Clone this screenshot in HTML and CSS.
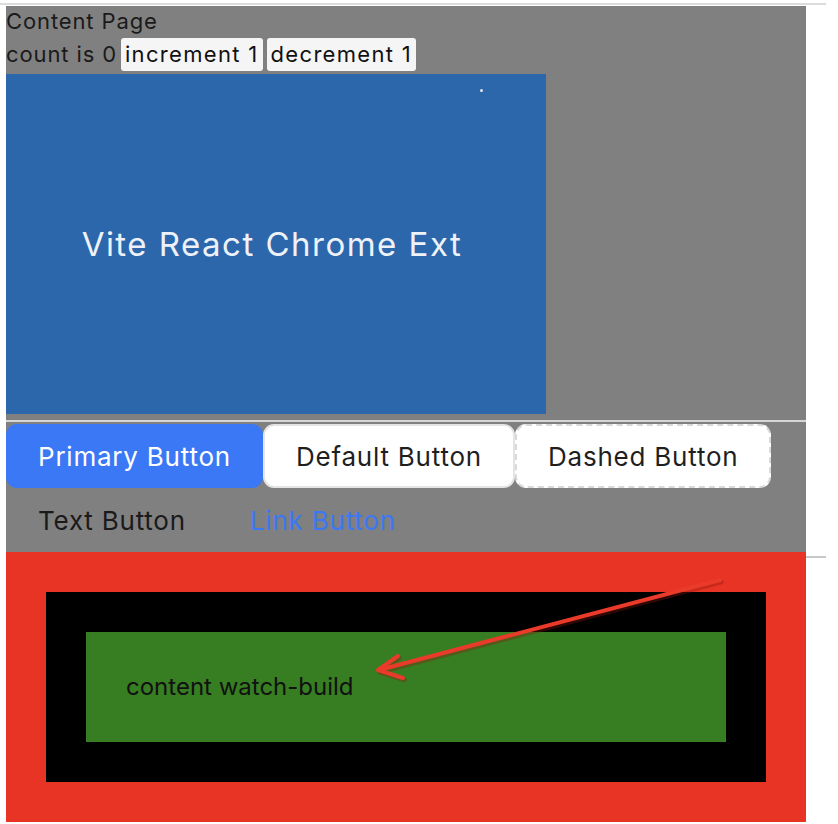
FILE: index.html
```html
<!DOCTYPE html>
<html>
<head>
<meta charset="utf-8">
<link rel="stylesheet" href="styles.css">
</head>
<body>
<div class="topline"></div>
<div class="page">
  <section class="content">
    <div class="title">Content Page</div>
    <div class="counter">
      <span class="count">count is 0</span>
      <button class="cbtn">increment 1</button>
      <button class="cbtn">decrement 1</button>
    </div>
    <div class="hero">
      <span class="dot"></span>
      <span class="hero-text">Vite React Chrome Ext</span>
    </div>
  </section>
  <section class="buttons">
    <div class="btn-row">
      <button class="btn btn-primary">Primary Button</button>
      <button class="btn btn-default">Default Button</button>
      <button class="btn btn-dashed">Dashed Button</button>
    </div>
    <div class="btn-row">
      <button class="btn btn-text">Text Button</button>
      <button class="btn btn-link">Link Button</button>
    </div>
  </section>
  <div class="bottom-row">
    <section class="red">
      <div class="black">
        <div class="green">content watch-build</div>
      </div>
      <svg class="arrow" width="800" height="270" viewBox="0 0 800 270">
        <g fill="none" stroke-linecap="round" stroke-linejoin="round">
          <g stroke="#8a1a10" stroke-opacity="0.35" stroke-width="4.5" transform="translate(1.5,2)">
            <path d="M714 28 L373 118"/>
            <path d="M392 104 L372 118 L397 126"/>
          </g>
          <g stroke="#ea3a2a" stroke-width="4">
            <path d="M714 28 L373 118"/>
            <path d="M392 104 L372 118 L397 126"/>
          </g>
        </g>
      </svg>
    </section>
    <div class="stub"></div>
  </div>
</div>
</body>
</html>
```
FILE: styles.css
```css
html, body {
  margin: 0;
  padding: 0;
  background: #ffffff;
}

body {
  font-family: Inter, "Liberation Sans", sans-serif;
  color: #1a1a1a;
}

.topline {
  width: 826px;
  height: 2px;
  margin-top: 3px;
  background: #dcdcdc;
}

.page {
  margin: 1px 0 0 6px;
}

.content {
  width: 800px;
  background: #808080;
  padding-bottom: 6px;
}

.title {
  font-size: 22px;
  line-height: 31px;
  height: 31px;
  letter-spacing: 0.04em;
}

.counter {
  display: flex;
  align-items: flex-start;
  gap: 4px;
  height: 37px;
  padding-top: 1px;
  box-sizing: border-box;
  font-size: 22px;
}

.count {
  line-height: 33px;
  letter-spacing: 0.04em;
}

.cbtn {
  font-family: inherit;
  font-size: 22px;
  line-height: 27px;
  padding: 3px 4px 3px 4px;
  border: none;
  border-radius: 3px;
  background: #f5f5f5;
  color: #111;
  letter-spacing: 0.06em;
}

.hero {
  position: relative;
  width: 540px;
  height: 340px;
  box-sizing: border-box;
  padding-right: 8px;
  background: #2c67ab;
  display: flex;
  align-items: center;
  justify-content: center;
}

.hero-text {
  color: #eef2f8;
  font-size: 33px;
  letter-spacing: 0.045em;
}

.dot {
  position: absolute;
  left: 474px;
  top: 15px;
  width: 3px;
  height: 3px;
  border-radius: 50%;
  background: #e6e6e6;
}

.buttons {
  width: 800px;
  background: #808080;
  border-top: 2px solid #d6d6d6;
  padding-top: 2px;
}

.btn-row {
  display: flex;
  align-items: center;
  height: 64px;
}

.btn {
  font-family: Inter, "Liberation Sans", sans-serif;
  font-size: 26px;
  letter-spacing: 0.03em;
  height: 64px;
  padding: 0 31px;
  border-radius: 11px;
  border: 2px solid transparent;
  background: transparent;
  color: #1f1f1f;
  cursor: pointer;
}

.btn-primary {
  background: #3b78f6;
  color: #ffffff;
  padding: 0 30px;
}

.btn-default {
  background: #ffffff;
  border-color: #e4e4e4;
}

.btn-dashed {
  background: #ffffff;
  border: 2px dashed #d9d9d9;
}

.btn-text {
  color: #1a1a1a;
  padding: 0 30px;
}

.btn-link {
  color: #3b78f6;
  padding: 0 30px;
}

.bottom-row {
  display: flex;
  align-items: flex-start;
}

.red {
  position: relative;
  width: 800px;
  box-sizing: border-box;
  padding: 40px;
  background: #e83424;
}

.black {
  background: #000000;
  padding: 40px;
}

.green {
  background: #377d22;
  padding: 40px;
  font-size: 24px;
  line-height: 30px;
  color: #111;
}

.arrow {
  position: absolute;
  left: 0;
  top: 0;
}

.stub {
  width: 20px;
  height: 2px;
  margin-top: 4px;
  background: #c8c8c8;
}
```
